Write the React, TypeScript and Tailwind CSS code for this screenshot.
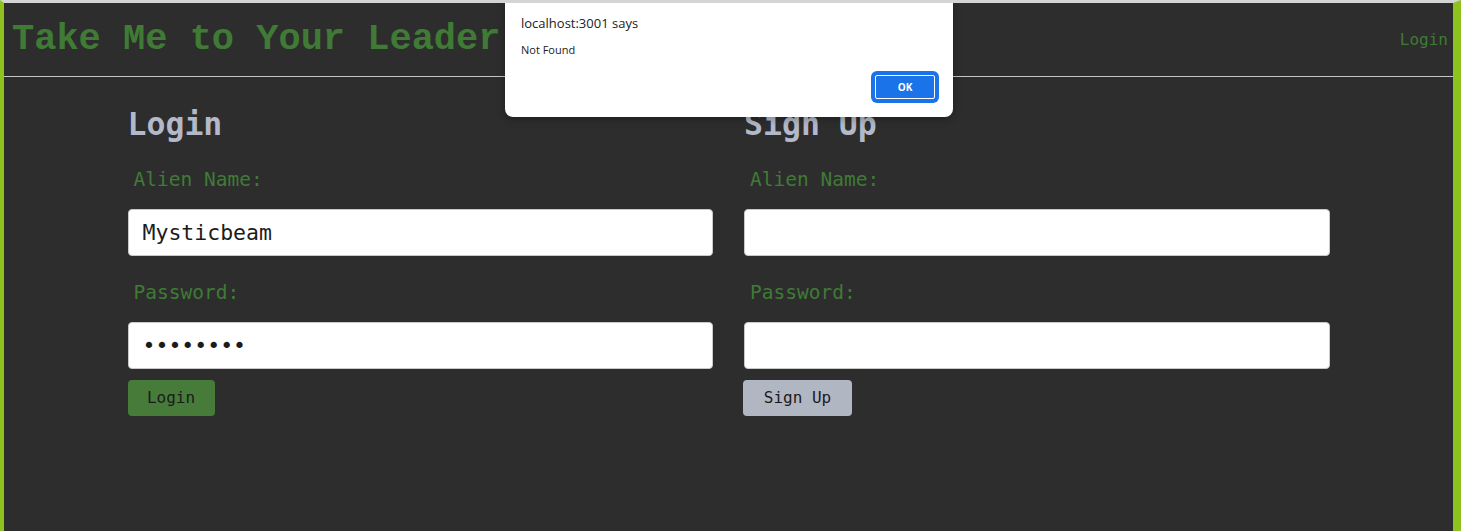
import React from "react";

const mono = "font-['Liberation_Mono',monospace]";
const plex = "font-['DejaVu_Sans_Mono',monospace]";

function Field({ label, value, type = "text" }: { label: string; value: string; type?: string }) {
  return (
    <>
      <label className={`${plex} ml-[6px] text-[19.5px] leading-[23px] text-[#3f7b35]`}>{label}</label>
      <input
        type={type}
        readOnly
        value={value}
        className={`${plex} mt-[18px] h-[47px] w-full rounded-[4px] border border-[#c9c9c9] bg-white px-[14px] text-[21.5px] text-[#1b1b1b] outline-none`}
      />
    </>
  );
}

function AuthForm({ title, button, buttonClass, name, pass }: { title: string; button: string; buttonClass: string; name: string; pass: string }) {
  return (
    <div className="flex flex-col">
      <h2 className={`${plex} text-[31.5px] font-bold leading-[37px] text-[#b3b9c9]`}>{title}</h2>
      <div className="mt-[25px] flex flex-col">
        <Field label="Alien Name:" value={name} />
      </div>
      <div className="mt-[25px] flex flex-col">
        <Field label="Password:" value={pass} type="password" />
      </div>
      <div className="mt-[11px]">
        <button className={`${plex} h-[36px] rounded-[4px] text-[16px] text-[#1b1b1b] ${buttonClass}`}>{button}</button>
      </div>
    </div>
  );
}

export default function App() {
  return (
    <div className="relative h-screen overflow-hidden border-t-[3px] border-l-4 border-r-[8px] border-t-[#d4d4d4] border-l-[#8dc21f] border-r-[#8dc21f] bg-[#2d2d2d]">
      <header className="flex h-[74px] items-center justify-between border-b border-[#c6c6c6] pl-2 pr-[5px]">
        <h1 className={`${mono} text-[37px] font-bold leading-none text-[#3f7b35]`}>Take Me to Your Leader</h1>
        <a className={`${plex} text-[16px] text-[#3f7b35]`}>Login</a>
      </header>

      <main className="mx-auto grid w-[1202px] grid-cols-2 gap-[31px] pt-[29px]">
        <AuthForm title="Login" button="Login" buttonClass="w-[87px] bg-[#467b3a]" name="Mysticbeam" pass="12345678" />
        <AuthForm title="Sign Up" button="Sign Up" buttonClass="w-[109px] bg-[#b1b6c3] -ml-px" name="" pass="" />
      </main>

      <div className="absolute left-[501px] top-[-3px] flex h-[117px] w-[448px] flex-col rounded-b-lg bg-white px-4 pt-[14px] shadow-[0_2px_8px_rgba(0,0,0,0.3)] font-['Open_Sans',sans-serif]">
        <p className="text-[13px] leading-[18px] text-[#222]">localhost:3001 says</p>
        <p className="mt-[11px] text-[11px] leading-[14px] text-[#222]">Not Found</p>
        <div className="mt-auto mb-4 flex justify-end">
          <button className="h-[28px] w-[64px] rounded-[4px] bg-[#1a73e8] text-[10px] font-bold text-white ring-2 ring-[#1a73e8] ring-offset-0 outline outline-1 -outline-offset-[3px] outline-white">
            OK
          </button>
        </div>
      </div>
    </div>
  );
}
